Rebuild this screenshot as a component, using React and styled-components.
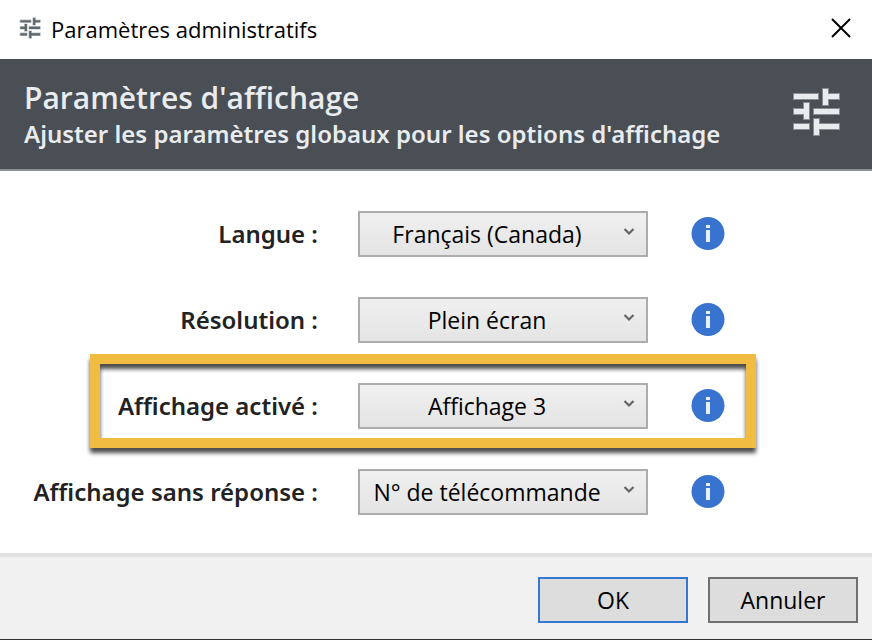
import React, { useState } from "react";
import styled, { createGlobalStyle } from "styled-components";

const settings = [
  { id: "language", label: "Langue :", value: "Français (Canada)" },
  { id: "resolution", label: "Résolution :", value: "Plein écran" },
  { id: "display", label: "Affichage activé :", value: "Affichage 3", highlighted: true },
  { id: "no-answer", label: "Affichage sans réponse :", value: "N° de télécommande" }
];

export default function App() {
  return (
    <>
      <GlobalStyle />
      <Dialog>
        <TitleBar>
          <SlidersIcon size={28} color="#5f686d" edge={3} />
          <WindowTitle>Paramètres administratifs</WindowTitle>
          <CloseButton type="button" aria-label="Fermer">
            <svg width="20" height="20" viewBox="0 0 20 20" aria-hidden="true">
              <path d="M1 1L19 19M19 1L1 19" stroke="#000" strokeWidth="2" />
            </svg>
          </CloseButton>
        </TitleBar>
        <Header>
          <HeaderText>
            <Heading>Paramètres d'affichage</Heading>
            <SubHeading>
              Ajuster les paramètres globaux pour les options d'affichage
            </SubHeading>
          </HeaderText>
          <SlidersIcon size={64} color="#e9ecef" edge={2} />
        </Header>
        <Settings>
          {settings.map((setting) => (
            <SettingRow key={setting.id} {...setting} />
          ))}
        </Settings>
        <Footer>
          <Button type="button" $primary>
            OK
          </Button>
          <Button type="button">Annuler</Button>
        </Footer>
      </Dialog>
    </>
  );
}

function SettingRow({ id, label, value, highlighted }) {
  const [selected, setSelected] = useState(value);

  return (
    <Row $highlighted={highlighted}>
      <Label htmlFor={id}>{label}</Label>
      <SelectBox>
        <Select
          id={id}
          value={selected}
          onChange={(e) => setSelected(e.target.value)}
        >
          <option>{value}</option>
        </Select>
        <Chevron width="12" height="10" viewBox="0 0 12 10" aria-hidden="true">
          <path d="M1.5 2L6 6.5L10.5 2" fill="none" stroke="#666" strokeWidth="2.2" />
        </Chevron>
      </SelectBox>
      <InfoButton type="button" aria-label="Information">
        <svg width="34" height="34" viewBox="0 0 34 34" aria-hidden="true">
          <circle cx="17" cy="16.5" r="16.5" fill="#3874cf" />
          <rect x="15" y="8" width="4" height="3" fill="#e8effa" />
          <rect x="15" y="13" width="4" height="12" fill="#e8effa" />
        </svg>
      </InfoButton>
    </Row>
  );
}

function SlidersIcon({ size, color, edge }) {
  return (
    <svg
      width={size}
      height={size}
      viewBox="0 0 64 64"
      fill={color}
      stroke={color}
      strokeWidth={edge}
      strokeOpacity="0.4"
      aria-hidden="true"
    >
      <path d="M10 14h24v5H10zM39 9h5v5h11v5H44v6h-5z" />
      <path d="M10 29h10v-6h5v16h-5v-5H10zM30 29h25v5H30z" />
      <path d="M10 44h15v5H10zM30 39h5v5h20v5H35v6h-5z" />
    </svg>
  );
}

const GlobalStyle = createGlobalStyle`
  *,
  *::after {
    box-sizing: border-box;
  }

  body {
    margin: 0;
    background: #fff;
    color: #000;
    font-family: "Open Sans", "Noto Sans", sans-serif;
    font-size: 23px;
    line-height: 32px;
  }

  button,
  select {
    font: inherit;
    color: inherit;
  }
`;

const Dialog = styled.main`
  display: flex;
  flex-direction: column;
  min-height: 100vh;
  border-bottom: 1px solid #333;
`;

const TitleBar = styled.div`
  display: flex;
  align-items: center;
  gap: 7px;
  height: 59px;
  padding: 0 16px 4px;
`;

const WindowTitle = styled.span`
  flex: 1;
  padding-top: 2px;
  font-size: 22px;
`;

const CloseButton = styled.button`
  display: flex;
  padding: 5px;
  border: 0;
  background: none;
`;

const Header = styled.header`
  display: flex;
  align-items: center;
  justify-content: space-between;
  height: 112px;
  padding: 0 24px 4px;
  border-bottom: 2px solid #8c9096;
  background: #4a4e55;
  color: #e9ecef;
`;

const HeaderText = styled.div`
  padding-top: 4px;
`;

const Heading = styled.h1`
  margin: 0;
  font-size: 30px;
  font-weight: 600;
  line-height: 40px;
`;

const SubHeading = styled.p`
  margin: 0;
  font-family: "Noto Sans", sans-serif;
  font-size: 24px;
  font-weight: 600;
`;

const Settings = styled.form`
  flex: 1;
  display: flex;
  flex-direction: column;
  gap: 40px;
  padding: 40px 0 38px;
`;

const Row = styled.div`
  position: relative;
  display: grid;
  grid-template-columns: minmax(0, 318px) 290px 40px;
  align-items: center;
  column-gap: 40px;

  ${({ $highlighted }) =>
    $highlighted &&
    `
    &::after {
      content: "";
      position: absolute;
      top: -29px;
      bottom: -19px;
      left: 90px;
      width: 666px;
      border: 10px solid #f0bc42;
      filter: drop-shadow(0 5px 2px rgba(0, 0, 0, 0.7));
      pointer-events: none;
    }
  `}
`;

const Label = styled.label`
  color: #222;
  font-family: "Noto Sans", sans-serif;
  font-size: 24px;
  font-weight: 600;
  text-align: right;
  white-space: nowrap;
`;

const SelectBox = styled.div`
  position: relative;
`;

const Select = styled.select`
  display: block;
  width: 100%;
  height: 46px;
  padding: 0 32px 0 0;
  border: 2px solid #acacac;
  border-radius: 0;
  background: linear-gradient(#f0f0f0, #e4e4e4);
  appearance: none;
  text-align: center;
  text-align-last: center;
`;

const Chevron = styled.svg`
  position: absolute;
  top: 16px;
  right: 13px;
  pointer-events: none;
`;

const InfoButton = styled.button`
  display: flex;
  justify-content: center;
  padding: 0;
  border: 0;
  background: none;
`;

const Footer = styled.footer`
  display: flex;
  justify-content: flex-end;
  gap: 20px;
  padding: 20px 14px 16px;
  border-top: 4px solid #e1e1e1;
  background: #f1f1f1;
`;

const Button = styled.button`
  width: 150px;
  height: 46px;
  padding: 0;
  border: 2px solid ${({ $primary }) => ($primary ? "#3478d4" : "#707070")};
  background: #ddd;
`;
